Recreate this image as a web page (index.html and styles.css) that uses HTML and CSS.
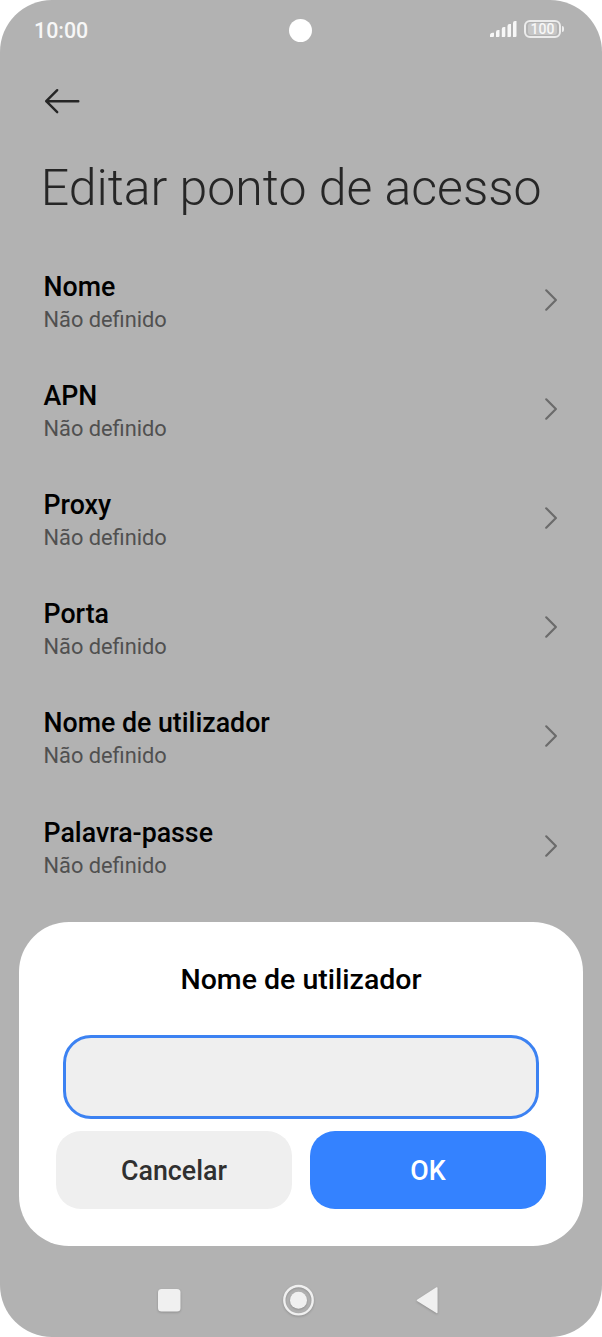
FILE: index.html
```html
<!DOCTYPE html>
<html lang="pt">
<head>
<meta charset="utf-8">
<title>Editar ponto de acesso</title>
<link rel="stylesheet" href="styles.css">
</head>
<body>
<div class="phone">
  <header class="status">
    <span class="time">10:00</span>
    <span class="camera"></span>
    <div class="indicators">
      <svg class="signal" width="28" height="18" viewBox="0 0 28 18" fill="#f7f7f7"><path d="M0 17v-1.500q0-2.800 2.800-2.800H4V16q0 1-1 1zM6 17v-5q0-2 2-2h1.500v6q0 1-1 1zM11.800 17V9q0-2 2-2h1.500v9q0 1-1 1zM17.500 17V6q0-2 2-2H21v12q0 1-1 1zM23 17V3q0-2 2-2h1.500v15q0 1-1 1z"/></svg>
      <div class="battery"><span class="level">100</span></div>
      <span class="tip"></span>
    </div>
  </header>
  <nav class="back"><svg width="36" height="26" viewBox="0 0 36 26" fill="none" stroke="#262626" stroke-width="2.400" stroke-linecap="round" stroke-linejoin="round"><path d="M34.300 13.200H2.200M13.200 2.200L2.200 13.200l11 11"/></svg></nav>
  <h1 class="title">Editar ponto de acesso</h1>
  <ul class="list">
    <li class="row"><div class="label"><div class="name">Nome</div><div class="value">Não definido</div></div><svg class="chev" viewBox="0 0 14 24"><path d="M2.200 2.300l9.700 9.700-9.700 9.700"/></svg></li>
    <li class="row"><div class="label"><div class="name">APN</div><div class="value">Não definido</div></div><svg class="chev" viewBox="0 0 14 24"><path d="M2.200 2.300l9.700 9.700-9.700 9.700"/></svg></li>
    <li class="row"><div class="label"><div class="name">Proxy</div><div class="value">Não definido</div></div><svg class="chev" viewBox="0 0 14 24"><path d="M2.200 2.300l9.700 9.700-9.700 9.700"/></svg></li>
    <li class="row"><div class="label"><div class="name">Porta</div><div class="value">Não definido</div></div><svg class="chev" viewBox="0 0 14 24"><path d="M2.200 2.300l9.700 9.700-9.700 9.700"/></svg></li>
    <li class="row"><div class="label"><div class="name">Nome de utilizador</div><div class="value">Não definido</div></div><svg class="chev" viewBox="0 0 14 24"><path d="M2.200 2.300l9.700 9.700-9.700 9.700"/></svg></li>
    <li class="row"><div class="label"><div class="name">Palavra-passe</div><div class="value">Não definido</div></div><svg class="chev" viewBox="0 0 14 24"><path d="M2.200 2.300l9.700 9.700-9.700 9.700"/></svg></li>
  </ul>
  <section class="dialog">
    <h2 class="heading">Nome de utilizador</h2>
    <div class="field"></div>
    <div class="actions"><button class="btn">Cancelar</button><button class="btn primary">OK</button></div>
  </section>
  <footer class="keys">
    <svg width="282" height="34" viewBox="0 0 282 34" fill="#f0f0f0"><rect x="0" y="5" width="22.500" height="22.500" rx="3.500"/><circle cx="140.500" cy="16.200" r="14.200" fill="none" stroke="#f0f0f0" stroke-width="2.400"/><circle cx="140.500" cy="16.200" r="8.500"/><path d="M259.500 16.300L278.800 4v24.400z" stroke="#f0f0f0" stroke-width="1.500" stroke-linejoin="round"/></svg>
  </footer>
</div>
</body>
</html>
```
FILE: styles.css
```css
* { box-sizing: border-box; }
body { margin: 0; background: #fff; font-family: Roboto, sans-serif; }
.phone { width: 602px; height: 1337px; background: #b2b2b2; border-radius: 52px; overflow: hidden; display: flex; flex-direction: column; }
.status { height: 60px; padding: 0 38px 0 34px; display: grid; grid-template-columns: 254.800px 23px 1fr; align-items: center; color: #f7f7f7; }
.time { font-size: 21.400px; font-weight: 500; }
.camera { width: 23px; height: 23px; border-radius: 50%; background: #fff; }
.indicators { display: flex; align-items: center; justify-content: flex-end; margin-top: -2px; }
.signal { margin-right: 6px; }
.battery { width: 37px; height: 18px; border: 2px solid #ececec; border-radius: 6px; padding: 1px 2px; }
.level { display: block; background: #c6c6c6; border-radius: 3px; font-size: 14px; font-weight: 500; line-height: 12px; text-align: center; }
.tip { width: 2px; height: 6px; margin-left: 1px; border-radius: 0 2px 2px 0; background: #ececec; }
.back { height: 54px; padding: 28px 0 0 44px; }
.back svg { display: block; }
.title { margin: 42px 0 0 40.700px; font-size: 50px; line-height: 64px; font-weight: 300; color: #262626; white-space: nowrap; }
.list { list-style: none; margin: 25px 0 0; padding: 0 44px 0 43.500px; }
.row { height: 109.200px; display: flex; justify-content: space-between; align-items: center; }
.label { padding-top: 6px; }
.name { font-size: 26.750px; line-height: 32px; font-weight: 500; color: #000; }
.value { font-size: 21.800px; line-height: 30px; margin-top: 2px; color: #505050; }
.chev { width: 14px; height: 24px; fill: none; stroke: #6b6b6b; stroke-width: 2.200; stroke-linecap: round; stroke-linejoin: round; }
.dialog { margin: 22px 19px 0; height: 324px; flex: none; background: #fff; border-radius: 50px; padding: 40px 37px 0; }
.heading { margin: 0; font-size: 28.500px; line-height: 36px; font-weight: 500; text-align: center; }
.field { height: 84px; margin: 36.500px 7px 12px; border: 3px solid #3c82f2; border-radius: 28px; background: #efefef; }
.actions { display: grid; grid-template-columns: 1fr 1fr; gap: 18px; }
.btn { height: 78px; border: 0; border-radius: 25px; padding: 2px 0 0; background: #efefef; color: #303030; font: 500 26.800px Roboto, sans-serif; }
.primary { background: #3482ff; color: #fff; }
.keys { margin-top: 37.500px; padding-left: 158px; }
.keys svg { display: block; filter: drop-shadow(0 1px 1px rgba(0, 0, 0, .2)); }
```
